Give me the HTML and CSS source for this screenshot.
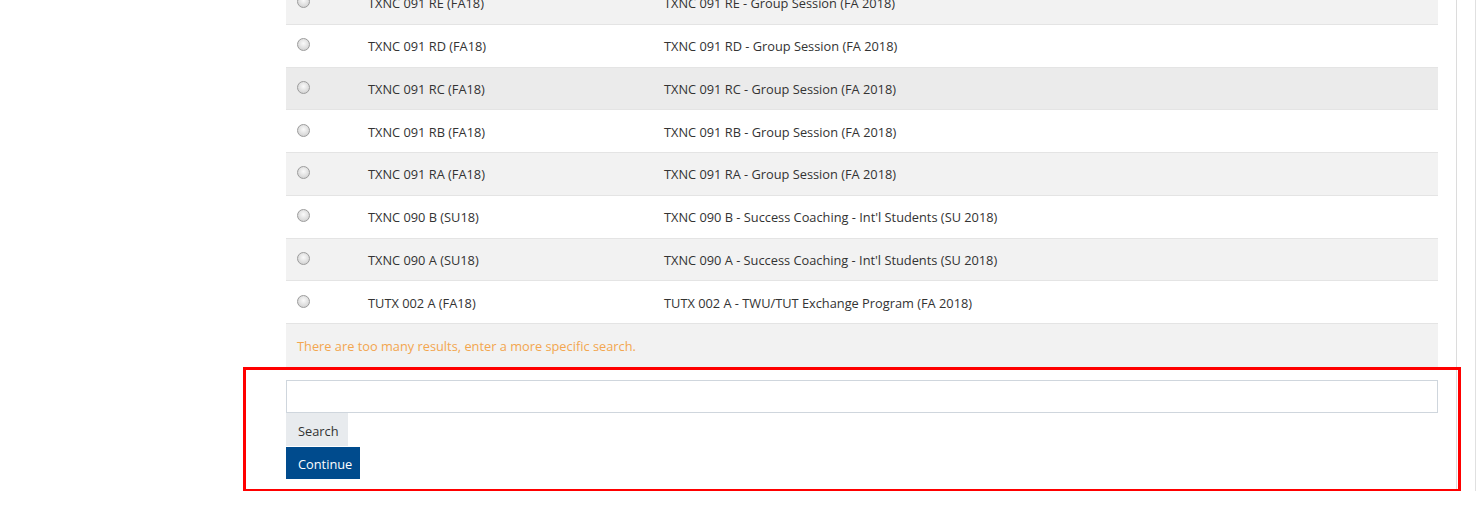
FILE: index.html
```html
<!DOCTYPE html>
<html>
<head>
<meta charset="utf-8">
<link rel="stylesheet" href="styles.css">
</head>
<body>
<div class="page">
  <div class="panel">
    <div class="results">
      <div class="row alt"><span class="c1"><input type="radio" name="s"></span><span class="c2">TXNC 091 RE (FA18)</span><span class="c3">TXNC 091 RE - Group Session (FA 2018)</span></div>
      <div class="row"><span class="c1"><input type="radio" name="s"></span><span class="c2">TXNC 091 RD (FA18)</span><span class="c3">TXNC 091 RD - Group Session (FA 2018)</span></div>
      <div class="row hover"><span class="c1"><input type="radio" name="s"></span><span class="c2">TXNC 091 RC (FA18)</span><span class="c3">TXNC 091 RC - Group Session (FA 2018)</span></div>
      <div class="row"><span class="c1"><input type="radio" name="s"></span><span class="c2">TXNC 091 RB (FA18)</span><span class="c3">TXNC 091 RB - Group Session (FA 2018)</span></div>
      <div class="row alt"><span class="c1"><input type="radio" name="s"></span><span class="c2">TXNC 091 RA (FA18)</span><span class="c3">TXNC 091 RA - Group Session (FA 2018)</span></div>
      <div class="row"><span class="c1"><input type="radio" name="s"></span><span class="c2">TXNC 090 B (SU18)</span><span class="c3">TXNC 090 B - Success Coaching - Int'l Students (SU 2018)</span></div>
      <div class="row alt"><span class="c1"><input type="radio" name="s"></span><span class="c2">TXNC 090 A (SU18)</span><span class="c3">TXNC 090 A - Success Coaching - Int'l Students (SU 2018)</span></div>
      <div class="row"><span class="c1"><input type="radio" name="s"></span><span class="c2">TUTX 002 A (FA18)</span><span class="c3">TUTX 002 A - TWU/TUT Exchange Program (FA 2018)</span></div>
      <div class="row alt msg">There are too many results, enter a more specific search.</div>
    </div>
    <div class="highlight">
      <input class="search-input" type="text">
      <button class="btn btn-search">Search</button>
      <button class="btn btn-continue">Continue</button>
    </div>
  </div>
</div>
</body>
</html>
```

FILE: styles.css
```css
html, body {
  margin: 0;
  padding: 0;
  background: #fff;
  font-family: "Open Sans", "Liberation Sans", sans-serif;
  font-size: 12.8px;
  color: #333;
  overflow: hidden;
}
.page {
  width: 1476px;
  height: 509px;
  box-sizing: border-box;
  border-right: 1px solid #e0e0e0;
}
.panel {
  width: 1457px;
  box-sizing: border-box;
  border-right: 1px solid #dcdcdc;
  border-bottom: 1px solid #dedede;
  padding-bottom: 4px;
  margin-top: -18px;
}
.results {
  margin-left: 286px;
  width: 1152px;
}
.row {
  display: flex;
  align-items: center;
  height: 42.75px;
  box-sizing: border-box;
  border-bottom: 1px solid #e4e4e4;
  background: #fff;
  line-height: 18px;
  padding-top: 1px;
}
.row.alt { background: #f2f2f2; }
.row.hover { background: #ebebeb; }
.c1 {
  width: 82px;
  flex: none;
  display: flex;
  align-items: center;
  padding-left: 11px;
  box-sizing: border-box;
}
.c2 {
  width: 296px;
  flex: none;
}
.c3 { flex: 1; }
.c1 input {
  appearance: none;
  -webkit-appearance: none;
  width: 13px;
  height: 13px;
  margin: -3px 0 0 0;
  border-radius: 50%;
  border: 1px solid #9c9c9c;
  background: radial-gradient(circle at 50% 40%, #fafafa 0, #e2e2e2 50%, #c8c8c8 100%);
  box-sizing: border-box;
}
.msg {
  color: #f3a64f;
  padding-left: 11px;
  border-bottom: none;
}
.highlight {
  margin-left: 243px;
  width: 1218px;
  box-sizing: border-box;
  border: 3px solid #f00;
  padding: 10px 20px 10px 40px;
  display: flex;
  flex-direction: column;
  align-items: flex-start;
}
.search-input {
  width: 1152px;
  height: 33px;
  box-sizing: border-box;
  border: 1px solid #cfd6dd;
  margin: 0;
  padding: 4px 8px;
  font: inherit;
}
.btn {
  font-family: "Open Sans", "Liberation Sans", sans-serif;
  font-size: 12.8px;
  border: none;
  margin: 0;
  padding: 0 12px;
  cursor: pointer;
}
.btn-search {
  height: 33px;
  width: 62px;
  background: #e8ebee;
  color: #333;
  padding-top: 3px;
}
.btn-continue {
  margin-top: 1px;
  height: 32px;
  width: 74px;
  background: #004b8d;
  color: #fff;
  padding-top: 2px;
}
```
